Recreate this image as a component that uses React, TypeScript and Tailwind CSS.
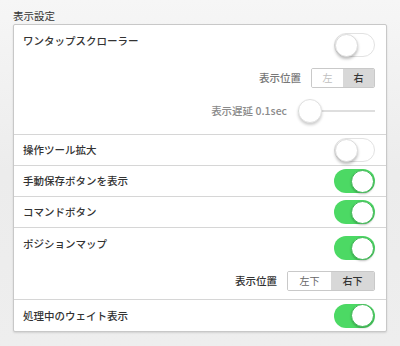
import React from "react";

const font = { fontFamily: '"Noto Sans CJK JP", "Noto Sans", sans-serif' };

function Toggle({ on }: { on: boolean }) {
  if (on) {
    return (
      <div className="flex h-[24px] w-[41px] shrink-0 items-center justify-end rounded-full bg-[#4cd964] p-[1px]">
        <div className="h-[23px] w-[23px] rounded-full border border-[#3fb955] bg-white shadow-[0_1px_2px_rgba(0,0,0,0.25)]" />
      </div>
    );
  }
  return (
    <div className="flex h-[24px] w-[41px] shrink-0 items-center justify-start rounded-full border border-[#e2e2e2] bg-white">
      <div className="h-[23px] w-[23px] rounded-full border border-[#dcdcdc] bg-white shadow-[0_2px_3px_rgba(0,0,0,0.25)]" />
    </div>
  );
}

function Segmented({
  items,
  selected,
  width,
  dim,
}: {
  items: string[];
  selected: number;
  width: string;
  dim?: boolean;
}) {
  return (
    <div className="flex h-[20px] overflow-hidden rounded-[2px] border border-[#c9c9c9]">
      {items.map((t, i) => (
        <div
          key={t}
          className={
            "flex items-center justify-center text-[10px] leading-none " +
            width +
            " " +
            (i === selected
              ? "bg-[#d8d8d8] font-medium text-[#333]"
              : dim
              ? "bg-white text-[#c0c0c0]"
              : "bg-white text-[#666]")
          }
        >
          {t}
        </div>
      ))}
    </div>
  );
}

function SimpleRow({ label, on, last }: { label: string; on: boolean; last?: boolean }) {
  return (
    <div
      className={
        "flex h-[31px] items-center justify-between pl-[9px] pr-[11px] " +
        (last ? "" : "border-b border-[#d6d6d6]")
      }
    >
      <span className="text-[10.5px] font-medium leading-[16px] text-[#333]">{label}</span>
      <Toggle on={on} />
    </div>
  );
}

export default function App() {
  return (
    <div
      className="h-[346px] w-[400px] bg-gradient-to-b from-[#f6f6f6] via-[#ececec] to-[#eeeeee] pt-[8px]"
      style={font}
    >
      <div className="pl-[13px] text-[10.5px] leading-[16px] text-[#333]">表示設定</div>
      <div className="ml-[13px] w-[374px] rounded-[2px] border border-[#c8c8c8] bg-white shadow-[0_1px_2px_rgba(0,0,0,0.12)]">
        {/* Row 1 */}
        <div className="flex flex-col border-b border-[#d6d6d6] pb-[11px] pl-[9px] pr-[11px] pt-[8px]">
          <div className="flex items-start justify-between">
            <span className="text-[10.5px] font-medium leading-[16px] text-[#333]">ワンタップスクローラー</span>
            <Toggle on={false} />
          </div>
          <div className="mt-[11px] flex items-center justify-end gap-[10px]">
            <span className="text-[10.5px] font-medium text-[#777]">表示位置</span>
            <Segmented items={["左", "右"]} selected={1} width="w-[31px]" dim />
          </div>
          <div className="mt-[11px] flex items-center justify-end gap-[11px]">
            <span className="text-[10.5px] font-medium text-[#8a8a8a]">表示遅延 0.1sec</span>
            <div className="relative flex h-[24px] w-[77px] items-center">
              <div className="absolute left-0 right-0 top-[11px] h-[2px] bg-[#dedede]" />
              <div className="absolute left-0 top-[11px] h-[2px] w-[2px] bg-[#4cd964]" />
              <div className="relative h-[24px] w-[24px] rounded-full border border-[#e0e0e0] bg-white shadow-[0_2px_3px_rgba(0,0,0,0.2)]" />
            </div>
          </div>
        </div>
        <SimpleRow label="操作ツール拡大" on={false} />
        <SimpleRow label="手動保存ボタンを表示" on />
        <SimpleRow label="コマンドボタン" on />
        {/* Position map */}
        <div className="flex flex-col border-b border-[#d6d6d6] pb-[8px] pl-[9px] pr-[11px] pt-[8px]">
          <div className="flex items-start justify-between">
            <span className="text-[10.5px] font-medium leading-[16px] text-[#333]">ポジションマップ</span>
            <Toggle on />
          </div>
          <div className="mt-[11px] flex items-center justify-end gap-[10px]">
            <span className="text-[10.5px] font-medium text-[#333]">表示位置</span>
            <Segmented items={["左下", "右下"]} selected={1} width="w-[43px]" />
          </div>
        </div>
        <SimpleRow label="処理中のウェイト表示" on last />
      </div>
    </div>
  );
}
